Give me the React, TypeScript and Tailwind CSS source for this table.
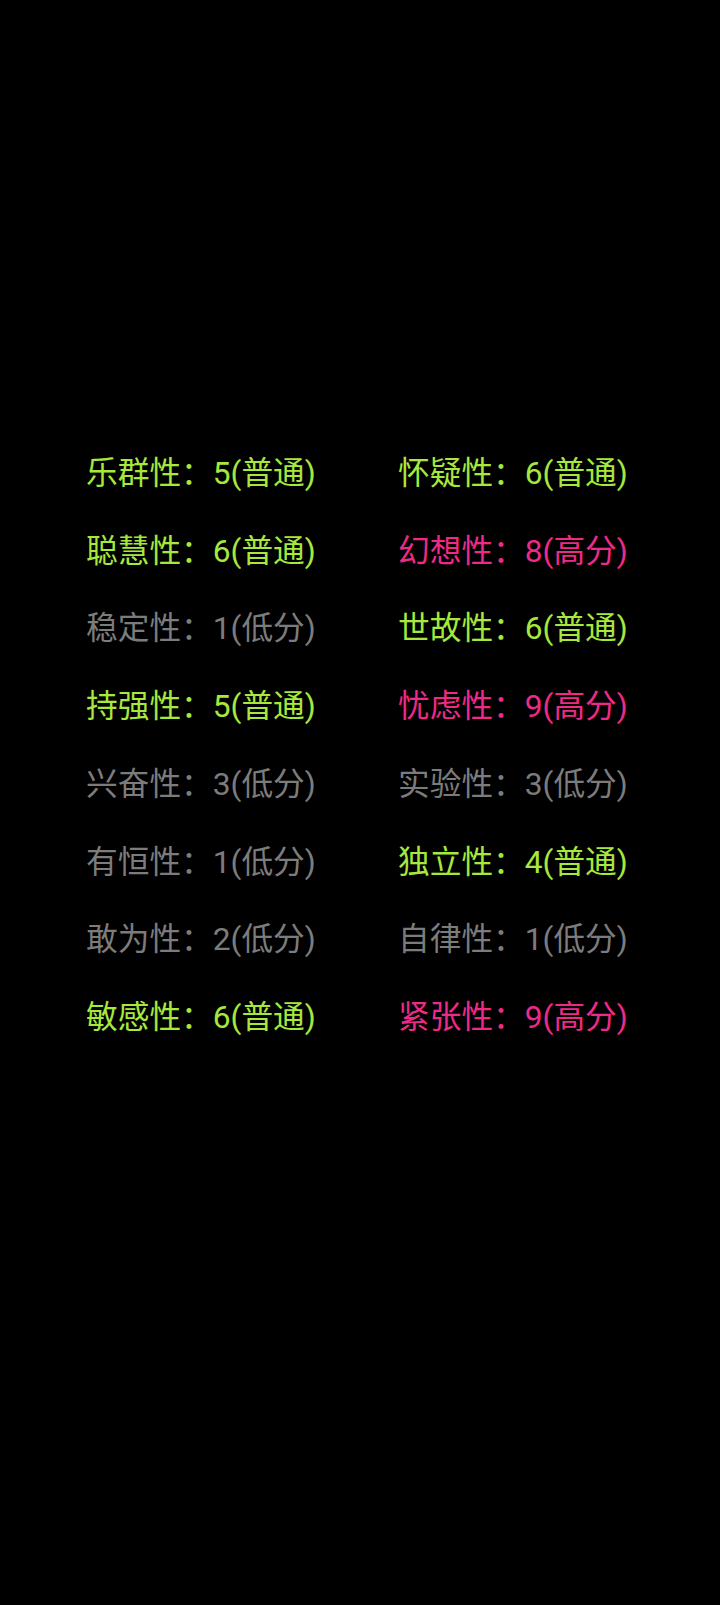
import React from 'react';

type Level = 'low' | 'normal' | 'high';

type Trait = {
  name: string;
  score: number;
  level: Level;
};

const traits: Trait[] = [
  { name: '乐群性', score: 5, level: 'normal' },
  { name: '怀疑性', score: 6, level: 'normal' },
  { name: '聪慧性', score: 6, level: 'normal' },
  { name: '幻想性', score: 8, level: 'high' },
  { name: '稳定性', score: 1, level: 'low' },
  { name: '世故性', score: 6, level: 'normal' },
  { name: '持强性', score: 5, level: 'normal' },
  { name: '忧虑性', score: 9, level: 'high' },
  { name: '兴奋性', score: 3, level: 'low' },
  { name: '实验性', score: 3, level: 'low' },
  { name: '有恒性', score: 1, level: 'low' },
  { name: '独立性', score: 4, level: 'normal' },
  { name: '敢为性', score: 2, level: 'low' },
  { name: '自律性', score: 1, level: 'low' },
  { name: '敏感性', score: 6, level: 'normal' },
  { name: '紧张性', score: 9, level: 'high' },
];

const levelLabel: Record<Level, string> = {
  low: '低分',
  normal: '普通',
  high: '高分',
};

const levelClass: Record<Level, string> = {
  low: 'text-[#7c7c7c]',
  normal: 'text-[#a6e83c]',
  high: 'text-[#ee2a88]',
};

export default function App() {
  return (
    <div
      className="min-h-[1605px] w-[720px] bg-black pt-[435px] pl-[86px]"
      style={{ fontFamily: 'Roboto, "Noto Sans CJK SC", sans-serif' }}
    >
      <div className="grid grid-cols-[312px_312px]">
        {traits.map((t) => (
          <div
            key={t.name}
            className={`flex h-[77.7px] items-center whitespace-nowrap text-[31.7px] font-normal ${levelClass[t.level]}`}
          >
            {t.name}：{t.score}({levelLabel[t.level]})
          </div>
        ))}
      </div>
    </div>
  );
}
